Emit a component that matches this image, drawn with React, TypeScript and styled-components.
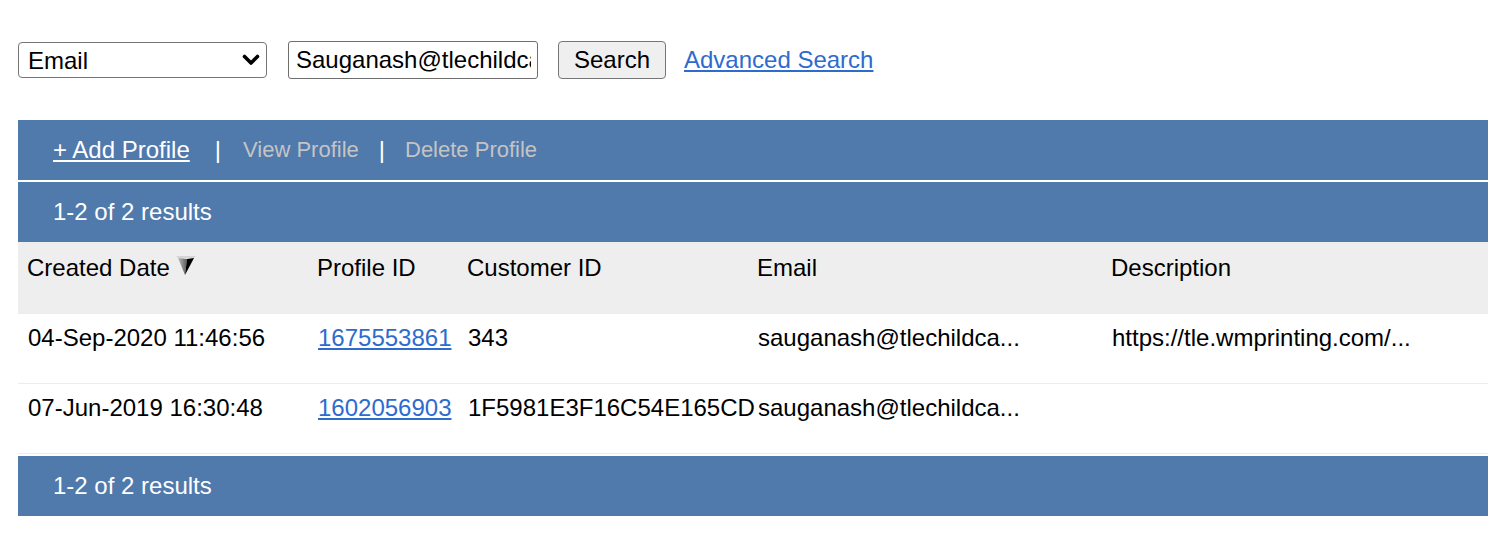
import React from "react";
import styled, { createGlobalStyle } from "styled-components";

const GlobalStyle = createGlobalStyle`
  html, body {
    margin: 0;
    padding: 0;
    background: #ffffff;
    font-family: "Liberation Sans", Arial, Helvetica, sans-serif;
    color: #000000;
  }
`;

const Page = styled.div`
  padding: 41px 10px 20px 18px;
`;

const SearchBar = styled.form`
  display: flex;
  align-items: center;
  height: 38px;
`;

const SelectWrap = styled.div`
  position: relative;
  width: 249px;
  height: 36px;
`;

const Select = styled.select`
  appearance: none;
  -webkit-appearance: none;
  box-sizing: border-box;
  width: 100%;
  height: 100%;
  border: 1px solid #767676;
  border-radius: 4px;
  background: #ffffff;
  font-family: "Liberation Sans", Arial, sans-serif;
  font-size: 24px;
  color: #000;
  padding: 0 0 0 9px;
  margin: 0;
  outline: none;
`;

const Chevron = styled.svg`
  position: absolute;
  right: 7px;
  top: 12px;
  pointer-events: none;
`;

const TextInput = styled.input`
  box-sizing: border-box;
  width: 250px;
  height: 38px;
  margin-left: 21px;
  border: 1px solid #6f6f6f;
  border-radius: 3px;
  padding: 0 6px 0 7px;
  font-family: "Liberation Sans", Arial, sans-serif;
  font-size: 24px;
  color: #000;
  outline: none;
`;

const Button = styled.button`
  box-sizing: border-box;
  width: 108px;
  height: 38px;
  margin-left: 20px;
  background: #efefef;
  border: 1px solid #767676;
  border-radius: 4px;
  font-family: "Liberation Sans", Arial, sans-serif;
  font-size: 24px;
  color: #000;
  padding: 0;
`;

const Link = styled.a`
  color: #2d6bcf;
  text-decoration: underline;
  font-size: 24px;
  cursor: pointer;
`;

const AdvancedLink = styled(Link)`
  margin-left: 18px;
`;

const Table = styled.div`
  margin-top: 41px;
  width: 1470px;
`;

const BlueBar = styled.div<{ $gapTop?: number }>`
  display: flex;
  align-items: center;
  height: 60px;
  background: #5079ac;
  padding-left: 35px;
  margin-top: ${(p) => p.$gapTop ?? 0}px;
  color: #ffffff;
  font-size: 24px;
`;

const ToolLink = styled.a`
  color: #ffffff;
  text-decoration: underline;
  font-size: 24px;
  cursor: pointer;
`;

const ToolDisabled = styled.span`
  color: #c4c4c4;
  font-size: 22px;
`;

const Pipe = styled.span<{ $before: number; $after: number }>`
  color: #ffffff;
  font-size: 24px;
  margin: 0 ${(p) => p.$after}px 0 ${(p) => p.$before}px;
`;

const Row = styled.div<{ $header?: boolean; $last?: boolean }>`
  display: grid;
  grid-template-columns: 290px 150px 290px 354px 1fr;
  height: ${(p) => (p.$header ? 71 : 69)}px;
  background: ${(p) => (p.$header ? "#eeeeee" : "#ffffff")};
  border-top: ${(p) => (p.$header ? "none" : "1px solid #ebebf7")};
  border-bottom: ${(p) => (p.$last ? "1px solid #ebebf7" : "none")};
  box-sizing: content-box;
`;

const Cell = styled.div<{ $header?: boolean }>`
  padding: ${(p) => (p.$header ? "12px 0 0 9px" : "10px 0 0 10px")};
  font-size: 24px;
  line-height: 28px;
  white-space: nowrap;
  display: flex;
  align-items: flex-start;
`;

const SortIcon = styled.svg`
  margin: 1px 0 0 6px;
`;

const Footer = styled(BlueBar)``;

type Profile = {
  created: string;
  id: string;
  customer: string;
  email: string;
  description: string;
};

const profiles: Profile[] = [
  {
    created: "04-Sep-2020 11:46:56",
    id: "1675553861",
    customer: "343",
    email: "sauganash@tlechildca...",
    description: "https://tle.wmprinting.com/...",
  },
  {
    created: "07-Jun-2019 16:30:48",
    id: "1602056903",
    customer: "1F5981E3F16C54E165CD",
    email: "sauganash@tlechildca...",
    description: "",
  },
];

export default function App() {
  return (
    <>
      <GlobalStyle />
      <Page>
        <SearchBar onSubmit={(e) => e.preventDefault()}>
          <SelectWrap>
            <Select defaultValue="email">
              <option value="email">Email</option>
              <option value="id">Profile ID</option>
              <option value="customer">Customer ID</option>
            </Select>
            <Chevron width="18" height="12" viewBox="0 0 18 12">
              <path
                d="M2.5 2.5 L9 9 L15.5 2.5"
                fill="none"
                stroke="#000"
                strokeWidth="3.6"
                strokeLinecap="round"
                strokeLinejoin="round"
              />
            </Chevron>
          </SelectWrap>
          <TextInput defaultValue="Sauganash@tlechildcare.com" />
          <Button type="submit">Search</Button>
          <AdvancedLink>Advanced Search</AdvancedLink>
        </SearchBar>

        <Table>
          <BlueBar>
            <ToolLink>+ Add Profile</ToolLink>
            <Pipe $before={25} $after={22}>|</Pipe>
            <ToolDisabled>View Profile</ToolDisabled>
            <Pipe $before={20} $after={20}>|</Pipe>
            <ToolDisabled>Delete Profile</ToolDisabled>
          </BlueBar>
          <BlueBar $gapTop={2}>1-2 of 2 results</BlueBar>

          <Row $header>
            <Cell $header>
              Created Date
              <SortIcon width="20" height="21" viewBox="0 0 20 21">
                <defs>
                  <linearGradient id="sortLeft" x1="0" y1="0" x2="1" y2="0">
                    <stop offset="0" stopColor="#bdbdbd" />
                    <stop offset="1" stopColor="#5a5a5a" />
                  </linearGradient>
                </defs>
                <polygon points="0,1 20,1 18,3 2,3" fill="#d6d6d6" />
                <polygon points="2,3 11,4 9,20" fill="url(#sortLeft)" />
                <polygon points="11,4 18,3 9,20" fill="#000" />
              </SortIcon>
            </Cell>
            <Cell $header>Profile ID</Cell>
            <Cell $header>Customer ID</Cell>
            <Cell $header>Email</Cell>
            <Cell $header>Description</Cell>
          </Row>

          {profiles.map((p, i) => (
            <Row key={p.id} $last={i === profiles.length - 1}>
              <Cell>{p.created}</Cell>
              <Cell>
                <Link>{p.id}</Link>
              </Cell>
              <Cell>{p.customer}</Cell>
              <Cell>{p.email}</Cell>
              <Cell>{p.description}</Cell>
            </Row>
          ))}

          <Footer $gapTop={2}>1-2 of 2 results</Footer>
        </Table>
      </Page>
    </>
  );
}
